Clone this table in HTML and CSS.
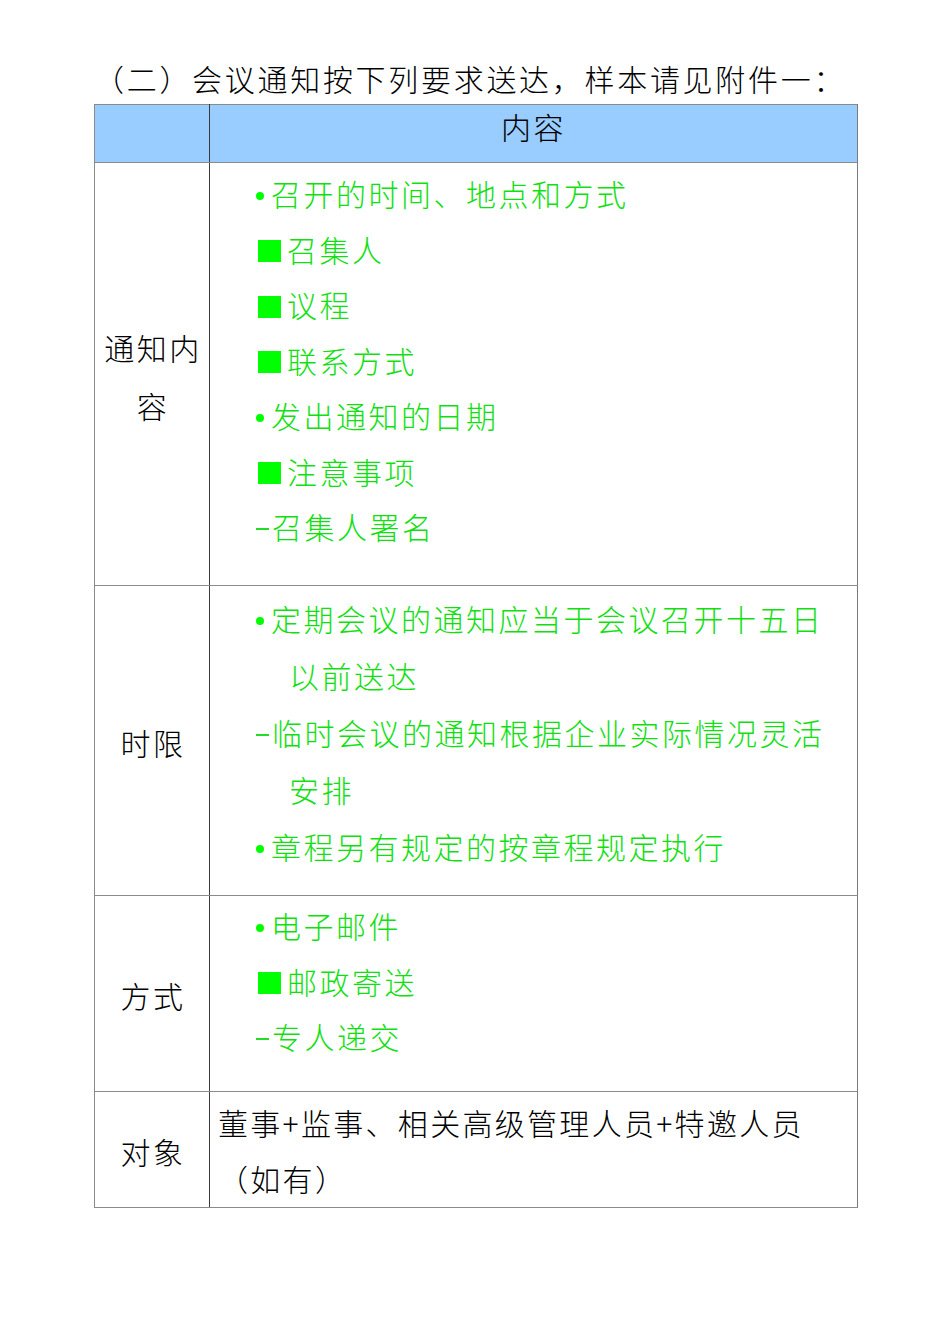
FILE: index.html
```html
<!DOCTYPE html>
<html lang="zh-CN">
<head>
<meta charset="utf-8">
<title>会议通知</title>
<link rel="stylesheet" href="styles.css">
</head>
<body>
<div class="page">
  <p class="title">（二）会议通知按下列要求送达，样本请见附件一：</p>
  <table class="grid">
    <colgroup><col class="col-label"><col class="col-content"></colgroup>
    <tr class="row-head">
      <th class="head-label"></th>
      <th class="head-content">内容</th>
    </tr>
    <tr class="row-1">
      <td class="label">通知内容</td>
      <td class="content list r1">
        <div class="item"><span class="mk dot"></span>召开的时间、地点和方式</div>
        <div class="item"><span class="mk sq"></span>召集人</div>
        <div class="item"><span class="mk sq"></span>议程</div>
        <div class="item"><span class="mk sq"></span>联系方式</div>
        <div class="item"><span class="mk dot"></span>发出通知的日期</div>
        <div class="item"><span class="mk sq"></span>注意事项</div>
        <div class="item"><span class="mk dash"></span>召集人署名</div>
      </td>
    </tr>
    <tr class="row-2">
      <td class="label">时限</td>
      <td class="content list r2">
        <div class="item"><span class="mk dot"></span>定期会议的通知应当于会议召开十五日<br>以前送达</div>
        <div class="item"><span class="mk dash"></span>临时会议的通知根据企业实际情况灵活<br>安排</div>
        <div class="item"><span class="mk dot"></span>章程另有规定的按章程规定执行</div>
      </td>
    </tr>
    <tr class="row-3">
      <td class="label">方式</td>
      <td class="content list r3">
        <div class="item"><span class="mk dot"></span>电子邮件</div>
        <div class="item"><span class="mk sq"></span>邮政寄送</div>
        <div class="item"><span class="mk dash"></span>专人递交</div>
      </td>
    </tr>
    <tr class="row-4">
      <td class="label">对象</td>
      <td class="content plain">董事+监事、相关高级管理人员+特邀人员<br>（如有）</td>
    </tr>
  </table>
</div>
</body>
</html>
```

FILE: styles.css
```css
html, body {
  margin: 0;
  padding: 0;
  background: #ffffff;
}

body {
  font-family: "Noto Sans CJK SC", "Noto Sans", sans-serif;
  font-weight: 300;
  color: #000000;
}

.page {
  padding: 58px 0 0 94px;
  width: 763px;
}

.title {
  margin: 0 0 6px 0;
  font-size: 30px;
  line-height: 40px;
  letter-spacing: 2.7px;
  white-space: nowrap;
}

.grid {
  border-collapse: collapse;
  width: 763px;
  table-layout: fixed;
  font-size: 30px;
  letter-spacing: 2.5px;
}

.col-label { width: 115px; }
.col-content { width: 648px; }

.grid th,
.grid td {
  padding: 0;
  border-top: 1px solid #8a8a8a;
  border-bottom: 1px solid #8a8a8a;
}

.grid th:first-child,
.grid td:first-child {
  border-left: 1.5px solid #8a8a8a;
  border-right: 1px solid #3a3a3a;
}

.grid th:last-child,
.grid td:last-child {
  border-right: 1.5px solid #7a7a7a;
}

.row-head { height: 58px; }
.row-1 { height: 423px; }
.row-2 { height: 310px; }
.row-3 { height: 196px; }
.row-4 { height: 116px; }

.grid .row-head th {
  background: #99ccff;
  font-weight: 300;
  vertical-align: top;
  padding-top: 1px;
  line-height: 40px;
}

.head-content {
  text-align: center;
}

.grid .label {
  text-align: center;
  vertical-align: middle;
  line-height: 58px;
  padding: 3px 5px 0 7px;
}

.content {
  vertical-align: top;
}

.grid .list {
  color: #10e010;
  padding-left: 46px;
}

.grid .r1 { line-height: 55.5px; padding-top: 3px; }
.grid .r2 { line-height: 57px; padding-top: 4px; }
.grid .r3 { line-height: 55.5px; padding-top: 2px; }

.item {
  padding-left: 33px;
  text-indent: -33px;
  white-space: nowrap;
}

.mk {
  display: inline-block;
  vertical-align: middle;
  background: #00ff00;
  text-indent: 0;
}

.dot {
  width: 8px;
  height: 8px;
  border-radius: 50%;
  margin-left: 0;
  margin-right: 7px;
  position: relative;
  top: -2px;
}

.sq {
  width: 23px;
  height: 22px;
  margin-left: 2px;
  margin-right: 6px;
  position: relative;
  top: -2px;
}

.dash {
  width: 13px;
  height: 2px;
  margin-right: 3px;
  background: #22dd22;
  position: relative;
  top: -2px;
}

.grid .plain {
  padding: 2px 0 0 8px;
  line-height: 56px;
  letter-spacing: 2.3px;
  white-space: nowrap;
}
```
